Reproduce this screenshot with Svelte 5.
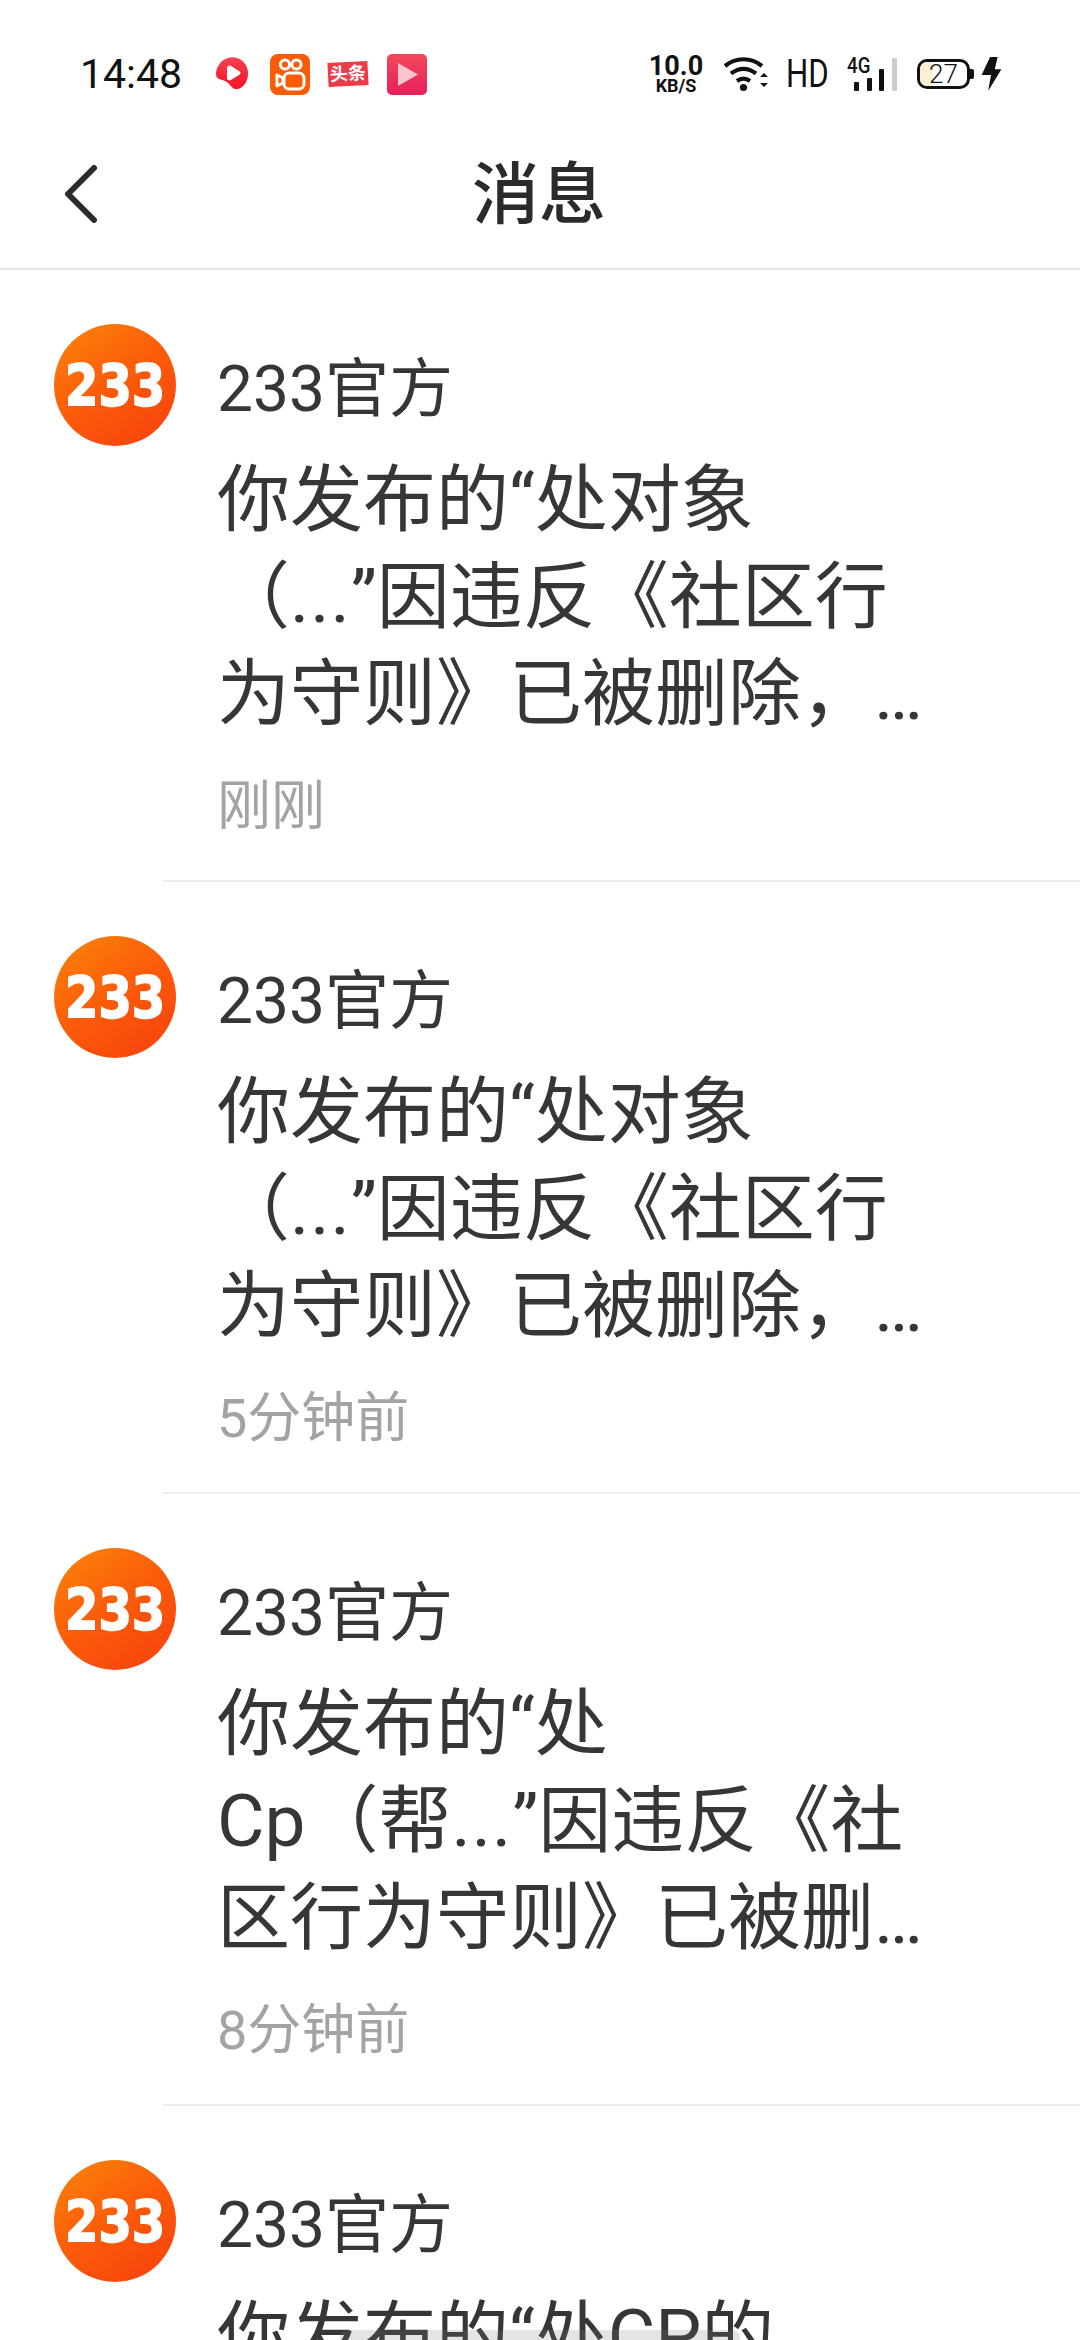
<script>
  const messages = [
    {
      lines: ['你发布的“处对象', '（...”因违反《社区行', '为守则》已被删除，…'],
      time: '刚刚'
    },
    {
      lines: ['你发布的“处对象', '（...”因违反《社区行', '为守则》已被删除，…'],
      time: '5分钟前'
    },
    {
      lines: ['你发布的“处', 'Cp（帮...”因违反《社', '区行为守则》已被删…'],
      time: '8分钟前'
    },
    {
      lines: ['你发布的“处CP的', '（...”因违反《社区行', '为守则》已被删除，…'],
      time: '10分钟前'
    }
  ];
</script>

<div class="page">
  <div class="status">
    <div class="left">
      <span class="clock">14:48</span>
      <svg class="video" width="34" height="34" viewBox="0 0 34 34">
        <defs>
          <linearGradient id="redg" x1="0" y1="0" x2="0" y2="1">
            <stop offset="0" stop-color="#f4424f" /><stop offset="1" stop-color="#f80f24" />
          </linearGradient>
        </defs>
        <path d="M12 1C22-2 33 6 32 18 31 28 24 33 19 32 15 31 14 26 9 24 4 22 0 22 0 17 0 10 5 3 12 1z" fill="url(#redg)" />
        <path d="M11 11c0-2 2-3 4-2l8 5c2 1 2 3 0 4l-8 5c-2 1-4 0-4-2z" fill="#fff" />
      </svg>
      <svg class="kuaishou" width="40" height="41" viewBox="0 0 40 41">
        <rect width="40" height="41" rx="8" fill="#fb5a06" />
        <g fill="none" stroke="#fff" stroke-width="3">
          <circle cx="15" cy="10.5" r="4.6" />
          <circle cx="26.5" cy="10.5" r="4.6" />
          <rect x="14" y="19" width="20" height="16" rx="5" />
          <path d="M13 24l-6-3v11l6-3z" stroke-linejoin="round" />
        </g>
      </svg>
      <span class="toutiao">头条</span>
      <svg class="music" width="40" height="41" viewBox="0 0 40 41">
        <defs>
          <linearGradient id="pinkg" x1="0" y1="0" x2="0" y2="1">
            <stop offset="0" stop-color="#f4485a" /><stop offset="1" stop-color="#e5205c" />
          </linearGradient>
        </defs>
        <rect width="40" height="41" rx="5" fill="url(#pinkg)" />
        <path d="M11 9l20 11.500-20 11.500z" fill="#fbc3cb" />
      </svg>
    </div>
    <div class="right">
      <div class="speed"><b>10.0</b><b class="unit">KB/S</b></div>
      <svg class="wifi" width="46" height="36" viewBox="0 0 46 36">
        <g fill="none" stroke="#111" stroke-width="4.2">
          <path d="M1 10c11-9 26-9 37 0" />
          <path d="M7 17.500c8-6 17-6 25 0" />
          <path d="M13 25c4-3 9-3 13 0" />
        </g>
        <circle cx="19.500" cy="31.500" r="3.600" fill="#111" />
        <path d="M36 21l4-4 4 4zM36 27l4 4 4-4z" fill="#111" />
      </svg>
      <span class="hd">HD</span>
      <div class="signal">
        <span class="net">4G</span>
        <i class="b1"></i><i class="b2"></i><i class="b3"></i><i class="b4"></i>
      </div>
      <div class="battery">
        <span class="fill"></span>
        <span class="level">27</span>
      </div>
      <svg class="bolt" width="22" height="34" viewBox="0 0 22 36">
        <path d="M10 0h8l-3 13h7L8 36l3-17H1z" fill="#111" />
      </svg>
    </div>
  </div>

  <header class="nav">
    <svg class="back" width="36" height="58" viewBox="0 0 36 58">
      <path d="M31 3L5 29l26 26" fill="none" stroke="#2b2b2b" stroke-width="6" stroke-linecap="round" stroke-linejoin="round" />
    </svg>
    <h1>消息</h1>
  </header>

  <div class="list">
    {#each messages as m}
      <div class="row">
        <svg class="avatar" width="122" height="122" viewBox="0 0 122 122">
          <defs>
            <linearGradient id="ava" x1="0.1" y1="0" x2="0.8" y2="1">
              <stop offset="0" stop-color="#fb820a" /><stop offset="0.5" stop-color="#fb5c0a" /><stop offset="1" stop-color="#f8440e" />
            </linearGradient>
          </defs>
          <circle cx="61" cy="61" r="61" fill="url(#ava)" />
          <text transform="translate(11 82) scale(1 1.17)" class="logo">233</text>
        </svg>
        <div class="body">
          <div class="title">233官方</div>
          <div class="text">
            {#each m.lines as line}
              <div class="line">
                {#each line.split('...') as part, i}{#if i > 0}<span class="dots">...</span>{/if}{part}{/each}
              </div>
            {/each}
          </div>
          <div class="time">{m.time}</div>
        </div>
      </div>
    {/each}
  </div>

  <div class="pill"></div>
</div>

<style>
  :global(body) {
    margin: 0;
    background: #fff;
  }

  .page {
    width: 1080px;
    height: 2340px;
    overflow: hidden;
    position: relative;
    background: #fff;
    font-family: Roboto, "Noto Sans CJK SC", sans-serif;
  }

  .status {
    height: 118px;
    padding: 30px 78px 0 80px;
    box-sizing: border-box;
    display: flex;
    align-items: center;
    justify-content: space-between;
    color: #111;
  }

  .left,
  .right {
    display: flex;
    align-items: center;
  }

  .clock {
    font-size: 41px;
  }

  .video {
    margin-left: 34px;
  }

  .kuaishou {
    margin-left: 20px;
  }

  .toutiao {
    margin-left: 18px;
    width: 40px;
    height: 24px;
    background: #ee3b48;
    color: #fff;
    font-size: 18px;
    font-weight: 700;
    line-height: 24px;
    text-align: center;
    transform: rotate(-3deg);
    white-space: nowrap;
  }

  .music {
    margin-left: 19px;
  }

  .speed {
    width: 50px;
    display: flex;
    flex-direction: column;
    align-items: center;
    line-height: 1;
    font-size: 27px;
  }

  .speed .unit {
    font-size: 18px;
    margin-top: -3px;
  }

  .wifi {
    margin-left: 23px;
  }

  .hd {
    margin-left: 16px;
    width: 42px;
    font-size: 39px;
    line-height: 1;
    transform: scaleX(0.8);
    transform-origin: left;
  }

  .signal {
    margin-left: 19px;
    position: relative;
    width: 50px;
    height: 34px;
    display: flex;
    align-items: flex-end;
    gap: 7.5px;
    padding-left: 7px;
    box-sizing: border-box;
  }

  .net {
    position: absolute;
    left: 0;
    top: -3px;
    font-size: 22px;
    line-height: 1.1;
    font-weight: 500;
    transform: scaleX(0.85);
    transform-origin: left;
  }

  .signal i {
    width: 5px;
    background: #111;
    border-radius: 1px;
    flex: none;
  }

  .b1 { height: 9px; }
  .b2 { height: 13px; }
  .b3 { height: 22px; }
  .signal .b4 { height: 33px; background: #ccc; }

  .battery {
    margin-left: 20px;
    width: 47px;
    height: 24px;
    border: 3px solid #111;
    border-radius: 10px;
    position: relative;
    display: flex;
    align-items: center;
    justify-content: center;
  }

  .battery::after {
    content: "";
    position: absolute;
    right: -7px;
    top: 7px;
    width: 4px;
    height: 10px;
    background: #111;
    border-radius: 0 2px 2px 0;
  }

  .fill {
    position: absolute;
    left: 0;
    top: 0;
    bottom: 0;
    width: 13px;
    background: #fbf0d6;
    border-radius: 7px 0 0 7px;
  }

  .level {
    position: relative;
    font-size: 26px;
    font-weight: 300;
    line-height: 1;
  }

  .bolt {
    margin-left: 10px;
  }

  .nav {
    height: 152px;
    padding-bottom: 10px;
    box-sizing: border-box;
    border-bottom: 2px solid #e4e4e4;
    position: relative;
    display: flex;
    align-items: center;
    justify-content: center;
  }

  .nav h1 {
    margin: 0 0 0 -2px;
    font-size: 67px;
    font-weight: 500;
    color: #2b2b2b;
  }

  .back {
    position: absolute;
    left: 63px;
    top: 47px;
  }

  .row {
    height: 612px;
    box-sizing: border-box;
    padding: 54px 0 0 54px;
    display: flex;
    position: relative;
  }

  .row::after {
    content: "";
    position: absolute;
    left: 162px;
    right: 0;
    bottom: 0;
    height: 2px;
    background: #eeeeee;
  }

  .avatar {
    flex: none;
  }

  .logo {
    font-family: "DejaVu Sans", sans-serif;
    font-weight: 700;
    font-size: 48px;
    fill: #fff;
    stroke: #fff;
    stroke-width: 1.5px;
  }

  .body {
    margin-left: 41px;
    color: #363636;
  }

  .title {
    font-size: 64px;
    line-height: 84px;
    margin-top: 24px;
  }

  .text {
    margin-top: 20px;
    font-size: 73px;
    line-height: 97px;
  }

  .line {
    white-space: nowrap;
  }

  .dots {
    letter-spacing: 1px;
  }

  .time {
    margin-top: 30px;
    font-size: 54px;
    line-height: 68px;
    color: #a3a3a3;
  }

  .pill {
    position: absolute;
    left: 340px;
    bottom: 0;
    width: 400px;
    height: 10px;
    border-radius: 8px 8px 0 0;
    background: rgba(120, 120, 120, 0.2);
  }
</style>
